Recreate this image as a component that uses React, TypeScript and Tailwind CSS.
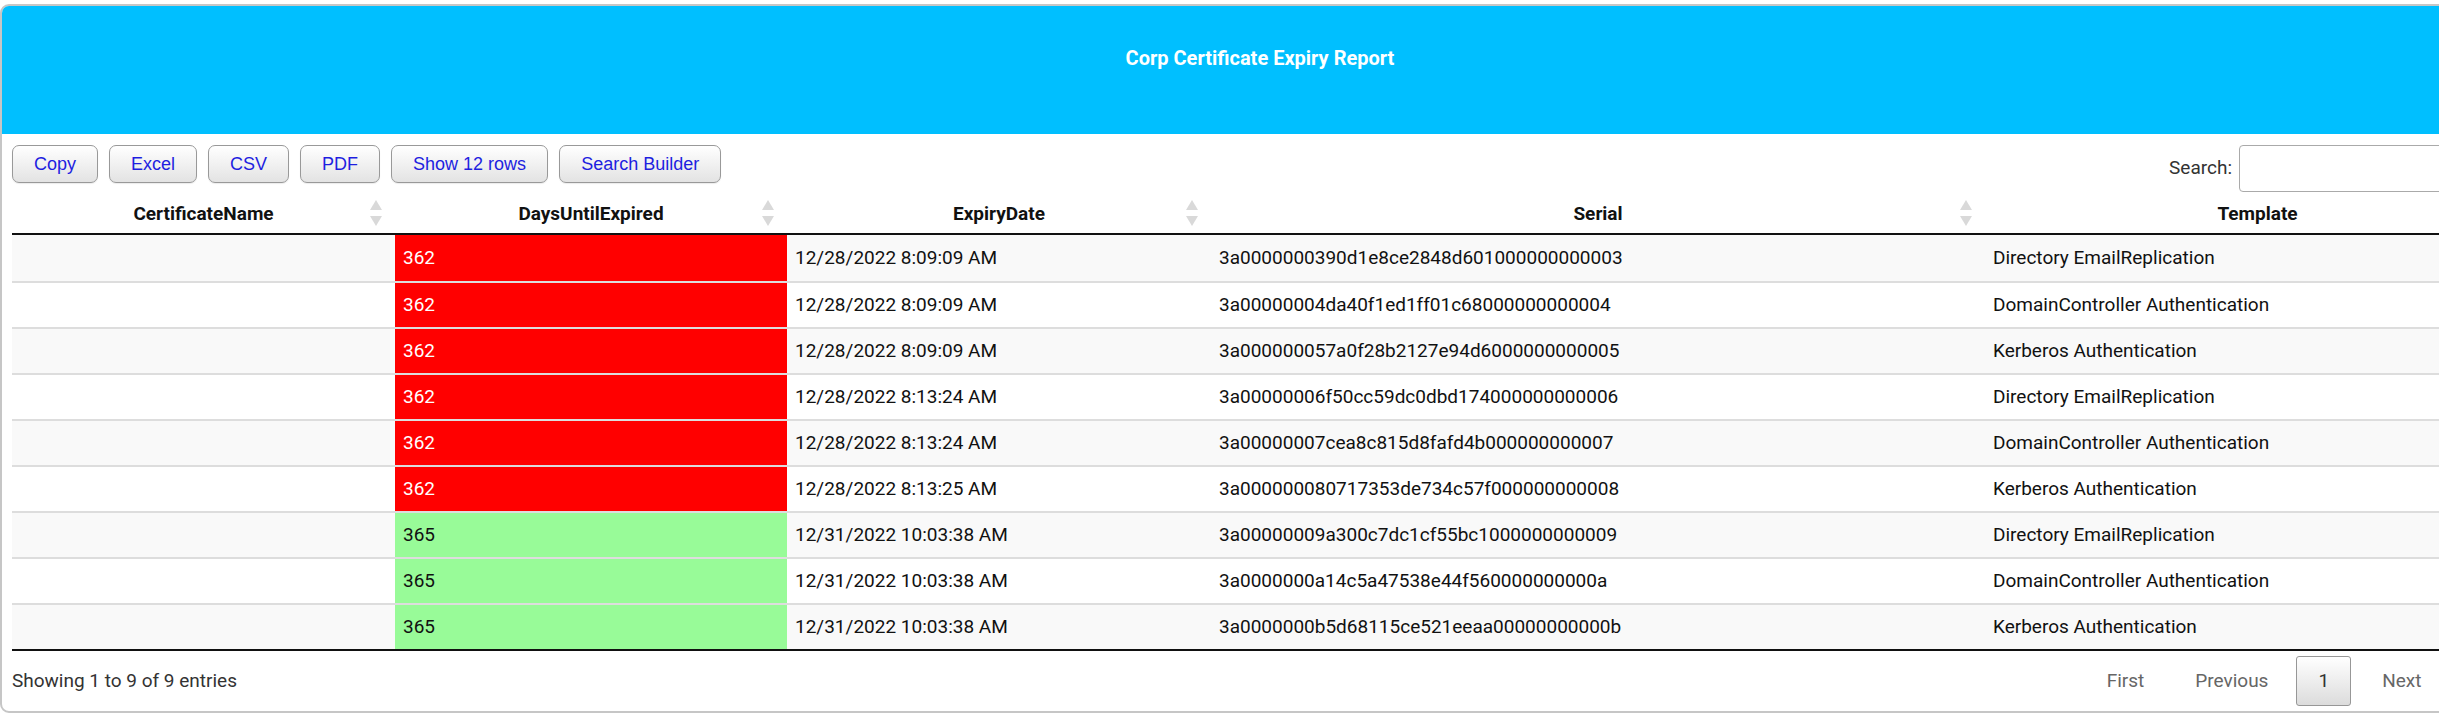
import React from "react";

const rows = [
  { days: "362", date: "12/28/2022 8:09:09 AM", serial: "3a0000000390d1e8ce2848d601000000000003", tpl: "Directory EmailReplication" },
  { days: "362", date: "12/28/2022 8:09:09 AM", serial: "3a00000004da40f1ed1ff01c68000000000004", tpl: "DomainController Authentication" },
  { days: "362", date: "12/28/2022 8:09:09 AM", serial: "3a000000057a0f28b2127e94d6000000000005", tpl: "Kerberos Authentication" },
  { days: "362", date: "12/28/2022 8:13:24 AM", serial: "3a00000006f50cc59dc0dbd174000000000006", tpl: "Directory EmailReplication" },
  { days: "362", date: "12/28/2022 8:13:24 AM", serial: "3a00000007cea8c815d8fafd4b000000000007", tpl: "DomainController Authentication" },
  { days: "362", date: "12/28/2022 8:13:25 AM", serial: "3a000000080717353de734c57f000000000008", tpl: "Kerberos Authentication" },
  { days: "365", date: "12/31/2022 10:03:38 AM", serial: "3a00000009a300c7dc1cf55bc1000000000009", tpl: "Directory EmailReplication" },
  { days: "365", date: "12/31/2022 10:03:38 AM", serial: "3a0000000a14c5a47538e44f560000000000a", tpl: "DomainController Authentication" },
  { days: "365", date: "12/31/2022 10:03:38 AM", serial: "3a0000000b5d68115ce521eeaa00000000000b", tpl: "Kerberos Authentication" },
];

function SortIcon() {
  return (
    <svg width="14" height="28" viewBox="0 0 14 28" className="absolute right-[12px] top-1/2 -translate-y-1/2">
      <polygon points="7,1 13,11 1,11" fill="#d9d9d9" />
      <polygon points="1,17 13,17 7,27" fill="#d9d9d9" />
    </svg>
  );
}

const cols = "grid grid-cols-[383px_392px_424px_774px_545px]";

function Btn({ children }: { children: React.ReactNode }) {
  return (
    <button className="h-[38px] px-[21px] rounded-[7px] border border-[#999] bg-linear-to-b from-[#ffffff] to-[#e3e3e3] text-[18px] text-[#1e1ee0] font-['Liberation_Sans',Arial,sans-serif] leading-none shadow-[0_1px_1px_rgba(0,0,0,0.08)]">
      {children}
    </button>
  );
}

export default function App() {
  return (
    <div className="w-[2439px] h-[714px] overflow-hidden bg-white font-['Roboto',sans-serif]">
      <div className="mt-[4px] w-[2542px] h-[709px] border-2 border-[#c6c6c6] rounded-[9px] overflow-hidden flex flex-col">
        <div className="h-[128px] bg-[#00bfff] flex justify-center pt-[40px] pr-[22px] shrink-0">
          <div className="text-white font-bold text-[20px] leading-[24px]">Corp Certificate Expiry Report</div>
        </div>
        <div className="px-[10px] flex flex-col">
          <div className="h-[58px] pt-[11px] flex items-start justify-between">
            <div className="flex gap-[11px]">
              <Btn>Copy</Btn>
              <Btn>Excel</Btn>
              <Btn>CSV</Btn>
              <Btn>PDF</Btn>
              <Btn>Show 12 rows</Btn>
              <Btn>Search Builder</Btn>
            </div>
            <div className="flex items-center gap-[7px]">
              <span className="text-[19px] text-[#333]">Search:</span>
              <div className="w-[291px] h-[47px] border border-[#aaa] rounded-[4px] bg-white" />
            </div>
          </div>
          <div className={`${cols} h-[43px] border-b-2 border-[#111] text-[19px] font-bold text-[#111]`}>
            {["CertificateName", "DaysUntilExpired", "ExpiryDate", "Serial", "Template"].map((h) => (
              <div key={h} className="relative flex items-center justify-center pt-[4px]">
                <span>{h}</span>
                <SortIcon />
              </div>
            ))}
          </div>
          <div className="border-b-2 border-[#111]">
            {rows.map((r, i) => {
              const red = r.days === "362";
              return (
                <div
                  key={i}
                  className={`${cols} h-[46px] text-[19px] ${i > 0 ? "border-t-2 border-[#dddddd]" : ""} ${i % 2 === 0 ? "bg-[#f9f9f9]" : "bg-white"}`}
                >
                  <div />
                  <div className={`flex items-center pl-[8px] ${red ? "bg-[#ff0000] text-white" : "bg-[#98fb98] text-[#111]"}`}>{r.days}</div>
                  <div className="flex items-center pl-[8px] text-[#111]">{r.date}</div>
                  <div className="flex items-center pl-[8px] text-[#111]">{r.serial}</div>
                  <div className="flex items-center pl-[8px] text-[#111]">{r.tpl}</div>
                </div>
              );
            })}
          </div>
          <div className="h-[60px] flex items-center justify-between">
            <div className="text-[19px] text-[#333]">Showing 1 to 9 of 9 entries</div>
            <div className="flex items-center text-[19px] text-[#666]">
              <span className="px-[21px] mr-[9px]">First</span>
              <span className="px-[21px] mr-[7px]">Previous</span>
              <span className="h-[50px] px-[21px] mr-[10px] flex items-center border border-[#979797] rounded-[3px] bg-linear-to-b from-[#ffffff] to-[#dcdcdc] text-[#333]">1</span>
              <span className="px-[21px] mr-[9px]">Next</span>
              <span className="px-[21px]">Last</span>
            </div>
          </div>
        </div>
      </div>
    </div>
  );
}
